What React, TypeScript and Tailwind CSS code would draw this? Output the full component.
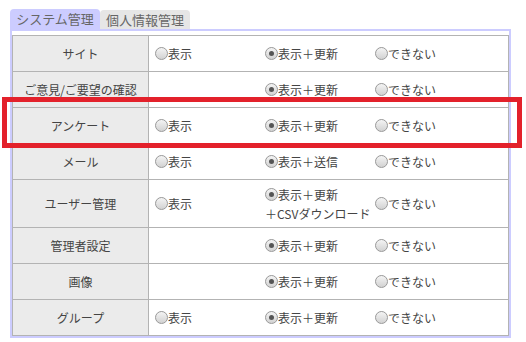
import React from "react";

type Opt = { label: React.ReactNode; checked?: boolean } | null;

const rows: { name: string; opts: Opt[]; tall?: boolean }[] = [
  { name: "サイト", opts: [{ label: "表示" }, { label: "表示＋更新", checked: true }, { label: "できない" }] },
  { name: "ご意見/ご要望の確認", opts: [null, { label: "表示＋更新", checked: true }, { label: "できない" }] },
  { name: "アンケート", opts: [{ label: "表示" }, { label: "表示＋更新", checked: true }, { label: "できない" }] },
  { name: "メール", opts: [{ label: "表示" }, { label: "表示＋送信", checked: true }, { label: "できない" }] },
  {
    name: "ユーザー管理",
    tall: true,
    opts: [
      { label: "表示" },
      {
        label: (
          <>
            表示＋更新
            <br />
            <span className="-ml-[13px]">＋CSVダウンロード</span>
          </>
        ),
        checked: true,
      },
      { label: "できない" },
    ],
  },
  { name: "管理者設定", opts: [null, { label: "表示＋更新", checked: true }, { label: "できない" }] },
  { name: "画像", opts: [null, { label: "表示＋更新", checked: true }, { label: "できない" }] },
  { name: "グループ", opts: [{ label: "表示" }, { label: "表示＋更新", checked: true }, { label: "できない" }] },
];

const Radio = ({ checked }: { checked?: boolean }) => (
  <span className="relative inline-block w-[13px] h-[13px] shrink-0 rounded-full border border-[#9a9a9a] bg-gradient-to-b from-[#f4f4f4] to-[#d2d2d2]">
    {checked && (
      <span className="absolute left-[3px] top-[3px] w-[5px] h-[5px] rounded-full bg-[#555]" />
    )}
  </span>
);

const Option = ({ opt }: { opt: Opt }) => (
  <div className="w-[110px] flex items-start">
    {opt && (
      <>
        <span className="pt-[2px]">
          <Radio checked={opt.checked} />
        </span>
        <span className="leading-[19px]">{opt.label}</span>
      </>
    )}
  </div>
);

const App = () => {
  return (
    <div
      className="relative w-[526px] h-[342px] bg-white text-[12px] text-[#444]"
      style={{ fontFamily: '"Noto Sans CJK JP", "Noto Sans", sans-serif' }}
    >
      <div className="pl-[10px] pt-[9px] flex items-end">
        <div className="w-[90px] h-[20px] bg-[#ccccff] rounded-t-[4px] text-[#666] text-[13px] flex items-center justify-center">
          システム管理
        </div>
        <div className="w-[90px] h-[19px] bg-[#e6e6e6] rounded-t-[4px] text-[#666] text-[13px] flex items-center justify-center">
          個人情報管理
        </div>
      </div>
      <div className="ml-[10px] w-[501px] border-2 border-t-2 border-[#ccccff] pt-[4px]">
        <table className="w-full border-collapse">
          <tbody>
            {rows.map((r) => (
              <tr key={r.name}>
                <td
                  className={`w-[136px] border border-[#b3b3b3] bg-[#ebebeb] text-center p-0 ${
                    r.tall ? "h-[48px]" : "h-[36px]"
                  }`}
                >
                  {r.name}
                </td>
                <td className="border border-[#b3b3b3] p-0 pl-[6px]">
                  <div className="flex items-center">
                    {r.opts.map((o, i) => (
                      <Option key={i} opt={o} />
                    ))}
                  </div>
                </td>
              </tr>
            ))}
          </tbody>
        </table>
      </div>
      <div className="absolute left-[2px] top-[97px] w-[520px] h-[51px] border-[5px] border-[#e3212b]" />
    </div>
  );
};

export default App;
